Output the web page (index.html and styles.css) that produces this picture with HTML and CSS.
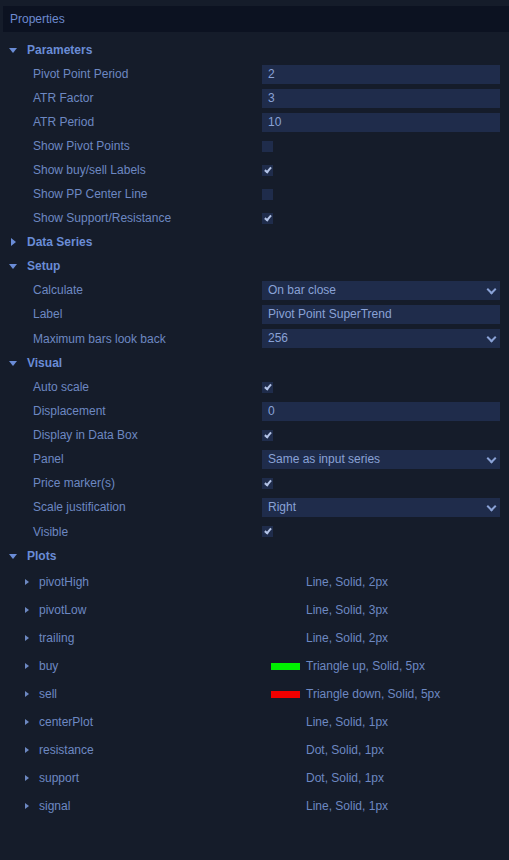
FILE: index.html
```html
<!DOCTYPE html>
<html lang="en">
<head>
    <meta charset="UTF-8">
    <meta name="viewport" content="width=device-width, initial-scale=1.0">
    <title>Properties</title>
    <link rel="stylesheet" href="styles.css">
</head>
<body>
    <header>Properties</header>

    <div class="grid">
        <div class="section"><span class="arrow down"></span>Parameters</div>
        <div class="row"><span class="label">Pivot Point Period</span><div class="field">2</div></div>
        <div class="row"><span class="label">ATR Factor</span><div class="field">3</div></div>
        <div class="row"><span class="label">ATR Period</span><div class="field">10</div></div>
        <div class="row"><span class="label">Show Pivot Points</span><span class="check"></span></div>
        <div class="row"><span class="label">Show buy/sell Labels</span><span class="check on"></span></div>
        <div class="row"><span class="label">Show PP Center Line</span><span class="check"></span></div>
        <div class="row"><span class="label">Show Support/Resistance</span><span class="check on"></span></div>

        <div class="section"><span class="arrow right"></span>Data Series</div>

        <div class="section"><span class="arrow down"></span>Setup</div>
        <div class="row"><span class="label">Calculate</span><div class="field select">On bar close</div></div>
        <div class="row"><span class="label">Label</span><div class="field">Pivot Point SuperTrend</div></div>
        <div class="row tall"><span class="label">Maximum bars look back</span><div class="field select">256</div></div>

        <div class="section"><span class="arrow down"></span>Visual</div>
        <div class="row"><span class="label">Auto scale</span><span class="check on"></span></div>
        <div class="row"><span class="label">Displacement</span><div class="field">0</div></div>
        <div class="row"><span class="label">Display in Data Box</span><span class="check on"></span></div>
        <div class="row"><span class="label">Panel</span><div class="field select">Same as input series</div></div>
        <div class="row"><span class="label">Price marker(s)</span><span class="check on"></span></div>
        <div class="row"><span class="label">Scale justification</span><div class="field select">Right</div></div>
        <div class="row tall"><span class="label">Visible</span><span class="check on"></span></div>

        <div class="section"><span class="arrow down"></span>Plots</div>
        <div class="plot"><span class="name"><span class="arrow small"></span>pivotHigh</span><span class="swatch"></span>Line, Solid, 2px</div>
        <div class="plot"><span class="name"><span class="arrow small"></span>pivotLow</span><span class="swatch"></span>Line, Solid, 3px</div>
        <div class="plot"><span class="name"><span class="arrow small"></span>trailing</span><span class="swatch"></span>Line, Solid, 2px</div>
        <div class="plot"><span class="name"><span class="arrow small"></span>buy</span><span class="swatch green"></span>Triangle up, Solid, 5px</div>
        <div class="plot"><span class="name"><span class="arrow small"></span>sell</span><span class="swatch red"></span>Triangle down, Solid, 5px</div>
        <div class="plot"><span class="name"><span class="arrow small"></span>centerPlot</span><span class="swatch"></span>Line, Solid, 1px</div>
        <div class="plot"><span class="name"><span class="arrow small"></span>resistance</span><span class="swatch"></span>Dot, Solid, 1px</div>
        <div class="plot"><span class="name"><span class="arrow small"></span>support</span><span class="swatch"></span>Dot, Solid, 1px</div>
        <div class="plot"><span class="name"><span class="arrow small"></span>signal</span><span class="swatch"></span>Line, Solid, 1px</div>
    </div>
</body>
</html>
```

FILE: styles.css
```css
body {
    font-family: 'Liberation Sans', Arial, sans-serif;
    font-size: 12px;
    margin: 0;
    padding: 0;
    background-color: #151c2a;
    color: #6d88c2;
    height: 860px;
    overflow: hidden;
}

header {
    margin: 6px 0 0 3px;
    height: 26px;
    line-height: 26px;
    padding-left: 7px;
    background-color: #0c1221;
    color: #6d8ad0;
}

.grid {
    margin-top: 6px;
}

.section {
    display: flex;
    align-items: center;
    height: 24px;
    padding-left: 9px;
    font-weight: bold;
    color: #6a8cd6;
}

.arrow {
    display: inline-block;
    width: 0;
    height: 0;
}

.arrow.down {
    border-left: 4px solid transparent;
    border-right: 4px solid transparent;
    border-top: 5px solid #6a8cd6;
    margin-right: 10px;
}

.arrow.right {
    border-top: 4px solid transparent;
    border-bottom: 4px solid transparent;
    border-left: 5px solid #6a8cd6;
    margin: 0 11px 0 2px;
}

.arrow.small {
    border-top: 3.5px solid transparent;
    border-bottom: 3.5px solid transparent;
    border-left: 4px solid #6d88c2;
    margin-right: 10px;
}

.row {
    display: grid;
    grid-template-columns: 262px 238px;
    align-items: center;
    height: 24px;
}

.row.tall {
    height: 25px;
}

.label {
    padding-left: 33px;
}

.field {
    height: 19px;
    line-height: 19px;
    padding-left: 6px;
    background-color: #1f2c4b;
    color: #8aa2d6;
    position: relative;
}

.select::after {
    content: '';
    position: absolute;
    right: 5px;
    top: 5px;
    width: 5px;
    height: 5px;
    border-right: 2px solid #8aa2d6;
    border-bottom: 2px solid #8aa2d6;
    transform: rotate(45deg);
}

.check {
    width: 11px;
    height: 11px;
    background-color: #1f2c4b;
    position: relative;
}

.check.on::after {
    content: '';
    position: absolute;
    left: 4px;
    top: 1px;
    width: 2px;
    height: 5px;
    border-right: 2px solid #b4c4e8;
    border-bottom: 2px solid #b4c4e8;
    transform: rotate(40deg);
}

.plot {
    display: flex;
    align-items: center;
    height: 28px;
}

.plot .name {
    display: flex;
    align-items: center;
    width: 246px;
    padding-left: 25px;
}

.swatch {
    width: 29px;
    height: 7px;
    margin: 0 6px 0 0;
}

.swatch.green {
    background-color: #00f000;
}

.swatch.red {
    background-color: #f00000;
}
```
